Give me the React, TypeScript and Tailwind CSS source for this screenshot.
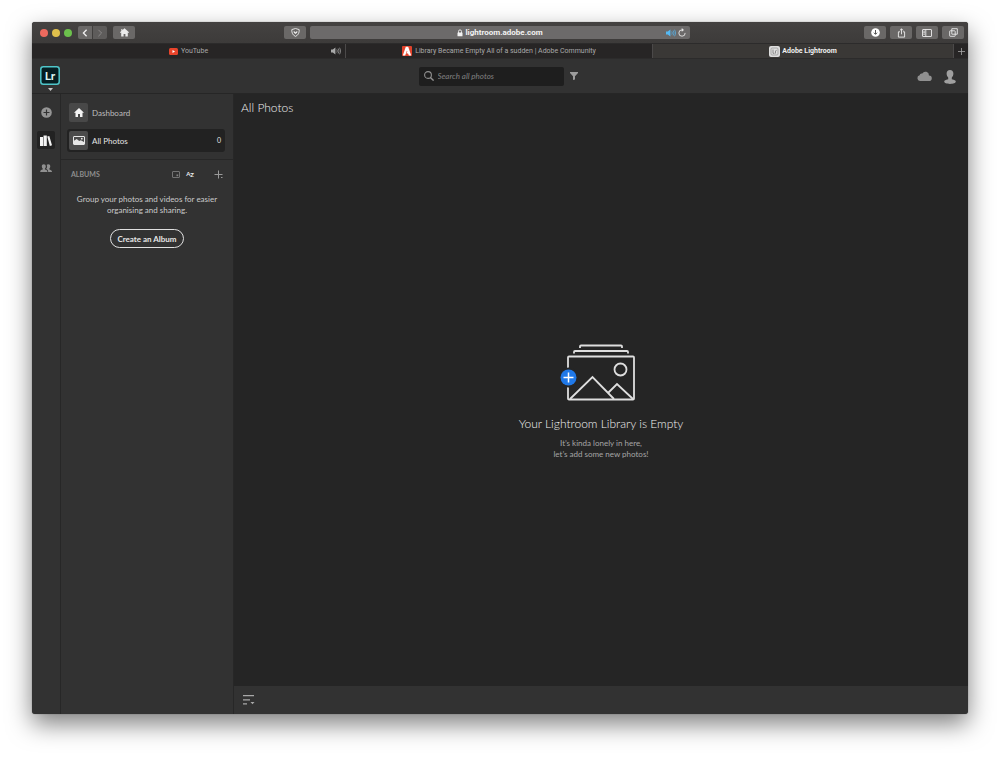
import type { ReactNode } from "react";

const ToolbarButton = ({
  label,
  children,
}: {
  label: string;
  children: ReactNode;
}) => (
  <button
    aria-label={label}
    className="flex h-[13px] w-[22px] items-center justify-center rounded-[2px] bg-[#6a6867] text-[#ececec]"
  >
    {children}
  </button>
);

const SpeakerIcon = () => (
  <svg width="10" height="8" viewBox="0 0 10 8" fill="none">
    <path d="M0 2.6h1.8L4.4.6v6.8L1.8 5.4H0z" fill="currentColor" />
    <path
      d="M5.8 2.4q1 1.6 0 3.2M7.2 1.5q1.7 2.5 0 5M8.6.7q2.3 3.3 0 6.6"
      stroke="currentColor"
      strokeWidth="0.7"
    />
  </svg>
);

const TitleBar = () => (
  <div className="flex h-[21px] items-center bg-linear-to-b from-[#444241] to-[#3d3b3a] px-1">
    <div className="flex flex-1 items-center">
      <div className="ml-1 flex gap-[4px]">
        <span className="size-[8px] rounded-full bg-[#ed6a5e]" />
        <span className="size-[8px] rounded-full bg-[#e0c04c]" />
        <span className="size-[8px] rounded-full bg-[#6cc14c]" />
      </div>
      <div className="mx-[6px] flex gap-px">
        <button
          aria-label="Back"
          className="flex h-[13px] w-[14px] items-center justify-center rounded-l-[2px] bg-[#6a6867] text-[#f0f0f0]"
        >
          <svg width="6" height="8" viewBox="0 0 6 8" fill="none">
            <path d="M4.6.8 1.4 4l3.2 3.2" stroke="currentColor" strokeWidth="1.3" />
          </svg>
        </button>
        <button
          aria-label="Forward"
          className="flex h-[13px] w-[14px] items-center justify-center rounded-r-[2px] bg-[#5e5c5b] text-[#8b8989]"
        >
          <svg width="6" height="8" viewBox="0 0 6 8" fill="none">
            <path d="M1.4.8 4.6 4 1.4 7.2" stroke="currentColor" />
          </svg>
        </button>
      </div>
      <ToolbarButton label="Home">
        <svg width="9" height="9" viewBox="0 0 9 9" fill="currentColor">
          <path d="M4.5.3 9 4.3l-.6.6-.6-.5v4.2H5.4V5.9H3.6v2.7H1.2V4.4l-.6.5L0 4.3l1.3-1.2V1h1.1v1.2z" />
        </svg>
      </ToolbarButton>
      <div className="mr-1 ml-auto">
        <ToolbarButton label="Privacy report">
          <svg width="9" height="9" viewBox="0 0 9 9" fill="none">
            <path
              d="M4.5.5 8.2 1.6c.2 3.3-.9 5.5-3.7 6.8C1.7 7.1.6 4.9.8 1.6z"
              stroke="currentColor"
              strokeWidth="0.9"
            />
            <path
              d="m2.5 3.2 1.4.3.6.9.6-.9 1.4-.3-.4 1.5L4.5 6 2.9 4.7z"
              fill="currentColor"
            />
          </svg>
        </ToolbarButton>
      </div>
    </div>
    <div className="flex h-[13px] w-[380px] items-center rounded-[2px] bg-[#6c6a6a] px-1">
      <div className="flex-1" />
      <div className="flex items-center gap-[2px] text-[8px] font-bold text-[#f2f2f2]">
        <svg width="6" height="8" viewBox="0 0 6 8" fill="none">
          <path d="M1.5 4V2.4a1.5 1.5 0 0 1 3 0V4" stroke="currentColor" strokeWidth="0.9" />
          <rect x="0.5" y="3.5" width="5" height="3.8" rx="0.5" fill="currentColor" />
        </svg>
        <span className="leading-[13px]">lightroom.adobe.com</span>
      </div>
      <div className="flex flex-1 items-center justify-end gap-[2px]">
        <button aria-label="Mute this tab" className="text-[#55b9f3]">
          <SpeakerIcon />
        </button>
        <button aria-label="Reload" className="text-[#e6e6e6]">
          <svg width="8" height="9" viewBox="0 0 7 8" fill="none">
            <path d="M6.3 4.4a2.8 2.8 0 1 1-2.7-2.7" stroke="currentColor" strokeWidth="0.8" />
            <path d="m3.3 0 2 1.7-2 1.6z" fill="currentColor" />
          </svg>
        </button>
      </div>
    </div>
    <div className="flex flex-1 justify-end gap-1">
      <ToolbarButton label="Downloads">
        <svg width="9" height="9" viewBox="0 0 9 9">
          <circle cx="4.5" cy="4.5" r="4.3" fill="#fff" />
          <path d="M4.5 2v4M2.9 4.7l1.6 1.7 1.6-1.7" stroke="#555" fill="none" />
        </svg>
      </ToolbarButton>
      <ToolbarButton label="Share">
        <svg width="9" height="10" viewBox="0 0 9 10" fill="none" stroke="currentColor" strokeWidth="0.9">
          <path d="M3 3.8H1.4v5.3h6.2V3.8H6M4.5 6.3V.9M2.9 2.4 4.5.8l1.6 1.6" />
        </svg>
      </ToolbarButton>
      <ToolbarButton label="Sidebar">
        <svg width="10" height="8" viewBox="0 0 10 8" fill="none" stroke="currentColor" strokeWidth="0.9">
          <rect x="0.5" y="0.5" width="9" height="7" rx="0.5" />
          <path d="M3.8.5v7M1.3 2.2h1.6M1.3 3.7h1.6M1.3 5.2h1.6" />
        </svg>
      </ToolbarButton>
      <ToolbarButton label="Tab overview">
        <svg width="9" height="9" viewBox="0 0 9 9" fill="none" stroke="currentColor" strokeWidth="0.9">
          <rect x="0.7" y="2.8" width="5.5" height="5.5" rx="0.5" />
          <path d="M2.8 6.2V.7h5.5v5.5H2.8" />
        </svg>
      </ToolbarButton>
    </div>
  </div>
);

const TabBar = () => (
  <div className="grid h-[16px] grid-cols-[314fr_307fr_300fr_15px] border-y border-[#2c2b2b] bg-[#272525] text-[7px] leading-[14px] text-[#a9a9a9]">
    <div className="flex items-center border-r border-[#4b4949] px-1">
      <span className="flex-1" />
      <a href="#youtube" className="flex items-center gap-[3px]">
        <svg width="9" height="7" viewBox="0 0 9 7">
          <rect width="9" height="7" rx="1.5" fill="#e8442b" />
          <path d="M3.5 2v3L6 3.5z" fill="#fff" />
        </svg>
        YouTube
      </a>
      <span className="flex flex-1 justify-end">
        <SpeakerIcon />
      </span>
    </div>
    <a
      href="#community"
      className="flex items-center justify-center gap-[3px] border-r border-[#4b4949]"
    >
      <svg width="10" height="10" viewBox="0 0 10 10">
        <rect width="10" height="10" rx="1" fill="#e2432c" />
        <path d="M.8 9.5 3.8.8h2.4l3 8.7H6.9L6 7.5H4.4l.9-1.8L5 4.5l-1.8 5z" fill="#fff" />
      </svg>
      Library Became Empty All of a sudden | Adobe Community
    </a>
    <a
      href="#lightroom"
      className="flex items-center justify-center gap-[2px] bg-[#3a3836] font-bold text-[#f0f0f0]"
    >
      <svg width="11" height="11" viewBox="0 0 11 11" fill="none">
        <rect width="11" height="11" rx="2" fill="#dedede" />
        <rect x="2" y="2" width="7" height="7" rx="1" stroke="#909090" strokeWidth="0.7" />
        <path d="M4 3.5v3.8h1.5M6.5 7.5V5q.2-.7 1-.6" stroke="#777" strokeWidth="0.8" />
      </svg>
      Adobe Lightroom
    </a>
    <button
      aria-label="New tab"
      className="flex items-center justify-center border-l border-[#4b4949]"
    >
      <svg width="7" height="7" viewBox="0 0 7 7" stroke="#a5a5a5" strokeWidth="0.8">
        <path d="M3.5 0v7M0 3.5h7" />
      </svg>
    </button>
  </div>
);

const AppHeader = () => (
  <header className="flex h-[35px] items-center border-b border-[#262626] bg-[#323232] px-2">
    <div className="flex flex-1 pt-1">
      <button aria-label="Lightroom menu" className="flex flex-col items-center gap-[3px]">
        <svg width="20" height="19" viewBox="0 0 20 19" fill="none">
          <rect
            x="0.8"
            y="0.8"
            width="18.4"
            height="17.4"
            rx="2.5"
            fill="#061e22"
            stroke="#4fc5c9"
            strokeWidth="1.5"
          />
          <text x="10" y="14" textAnchor="middle" fill="#dff6f6" className="text-[12px] font-bold">
            Lr
          </text>
        </svg>
        <svg width="5" height="3" viewBox="0 0 5 3" fill="#c8c8c8">
          <path d="M0 0h5L2.5 3z" />
        </svg>
      </button>
    </div>
    <div className="flex items-center gap-[6px]">
      <label className="flex h-[19px] w-[145px] items-center gap-1 rounded-[2px] bg-[#1e1e1e] px-[5px]">
        <svg
          width="10"
          height="10"
          viewBox="0 0 10 10"
          fill="none"
          stroke="#919191"
          className="shrink-0"
        >
          <circle cx="4" cy="4" r="3.4" strokeWidth="1.1" />
          <path d="m6.4 6.4 3.2 3.2" strokeWidth="1.4" />
        </svg>
        <input
          type="search"
          aria-label="Search all photos"
          placeholder="Search all photos"
          className="w-full min-w-0 bg-transparent text-[8px] text-[#ddd] italic outline-none placeholder:text-[#808080]"
        />
      </label>
      <button aria-label="Filter">
        <svg width="8" height="8" viewBox="0 0 8 8" fill="#9c9c9c">
          <path d="M0 0h8v1L5 4.3v3.2L3 8V4.3L0 1z" />
        </svg>
      </button>
    </div>
    <div className="flex flex-1 items-center justify-end gap-3 pr-1">
      <button aria-label="Cloud storage">
        <svg width="15" height="10" viewBox="0 0 15 10" fill="#909090">
          <path d="M3 10a2.9 2.9 0 0 1-.4-5.7 2.3 2.3 0 0 1 2.7-1.8A3.6 3.6 0 0 1 12 4.4a2.8 2.8 0 0 1 0 5.6z" />
        </svg>
      </button>
      <button aria-label="Account" className="pt-[2px]">
        <svg width="12" height="14" viewBox="0 0 12 14" fill="#a0a0a0">
          <path d="M6 0c2.1 0 3.5 1.5 3.4 3.7-.1 1.8-.8 2.9-1.6 3.8v1.7c2.7.4 4 1.3 4 2.4 0 1.4-2.6 2.4-5.8 2.4S.2 13 .2 11.6c0-1.1 1.3-2 4-2.4V7.5c-.8-.9-1.500-2-1.600-3.800C2.500 1.500 3.900 0 6 0z" />
        </svg>
      </button>
    </div>
  </header>
);

const Rail = () => (
  <nav className="flex w-[29px] shrink-0 flex-col items-center gap-[10px] border-r border-[#272727] pt-[9px]">
    <button aria-label="Add photos" className="flex size-[18px] items-center justify-center">
      <svg width="11" height="11" viewBox="0 0 11 11">
        <circle cx="5.5" cy="5.5" r="5.3" fill="#959595" />
        <path d="M5.5 2.5v6M2.5 5.5h6" stroke="#323232" strokeWidth="1.2" />
      </svg>
    </button>
    <button
      aria-label="My photos"
      className="flex size-[18px] items-center justify-center rounded-[2px] bg-[#222]"
    >
      <svg width="12" height="11" viewBox="0 0 12 11" fill="#f4f4f4">
        <path d="M0 2h3v9H0zM3.5.5h3.3V11H3.500zM7.300 1.600l2-.6L12 10.200l-2.200.7z" />
      </svg>
    </button>
    <button aria-label="Sharing" className="flex size-[18px] items-center justify-center">
      <svg width="12" height="9" viewBox="0 0 12 9" fill="#909090">
        <path d="M3.8.3c1.2 0 2 .9 2 2.1 0 1-.4 1.6-.9 2.2v.9c1.7.4 2.5 1 2.5 2.5H.2c0-1.5.8-2.1 2.5-2.5v-.9c-.5-.6-.9-1.2-.9-2.2 0-1.2.8-2.1 2-2.1z" />
        <path d="M6.6 1C7 .5 7.6.2 8.3.2c1.2 0 2 .9 2 2.1 0 1-.4 1.7-.9 2.2v1C11.1 6 12 6.500 12 8H8.200c0-1.500-.6-2.300-1.900-2.900v-.3c.6-.8.8-1.600.8-2.400 0-.6-.2-1-.5-1.400z" />
      </svg>
    </button>
  </nav>
);

const Sidebar = () => (
  <aside className="w-[173px] shrink-0 border-r border-[#272727] pt-[7px]">
    <div className="flex flex-col gap-[5px] pr-2 pb-[7px] pl-[6px] text-[8px]">
      <a href="#dashboard" className="flex h-[23px] items-center gap-1 px-[2px] text-[#bdbdbd]">
        <span className="flex size-[19px] items-center justify-center rounded-[2px] bg-[#484848]">
          <svg width="10" height="9" viewBox="0 0 10 9" fill="#f4f4f4">
            <path d="m5 0 5 4.7H8.5V9H6V6H4v3H1.5V4.7H0z" />
          </svg>
        </span>
        Dashboard
      </a>
      <a
        href="#all"
        className="flex h-[23px] items-center gap-1 rounded-[3px] bg-[#222] px-[2px] text-[#e4e4e4]"
      >
        <span className="flex size-[19px] items-center justify-center rounded-[2px] bg-[#4b4b4b]">
          <svg width="12" height="9" viewBox="0 0 12 9">
            <rect x="0.5" y="0.5" width="11" height="8" rx="0.5" fill="#4b4b4b" stroke="#e6e6e6" />
            <path d="M1 4.7 3.7 3l2.5 2.1 1.6-.8L11 6v2.5H1z" fill="#e6e6e6" />
            <circle cx="8.8" cy="2.7" r="0.9" fill="#e6e6e6" />
          </svg>
        </span>
        All Photos
        <span className="ml-auto pr-[2px] text-[7px]">0</span>
      </a>
    </div>
    <div className="flex h-[29px] items-center border-t border-[#272727] px-[10px]">
      <h2 className="text-[7px] font-bold text-[#8e8e8e]">ALBUMS</h2>
      <button aria-label="Album view" className="ml-auto">
        <svg width="8" height="7" viewBox="0 0 8 7" fill="none">
          <rect x="0.5" y="0.5" width="7" height="6" rx="0.5" stroke="#858585" strokeWidth="0.8" />
          <rect x="4.5" y="3.5" width="1.7" height="1.7" fill="#858585" />
        </svg>
      </button>
      <button
        aria-label="Sort albums"
        className="ml-[6px] flex text-[6px] leading-[8px] font-bold text-[#f0f0f0]"
      >
        A<span className="pt-px">Z</span>
      </button>
      <button aria-label="Add album" className="ml-5">
        <svg width="9" height="9" viewBox="0 0 9 9" stroke="#9a9a9a">
          <path d="M4.5.5v8M.5 4.5h8M7 7.5h1.5" />
        </svg>
      </button>
    </div>
    <div className="flex flex-col items-center gap-[13px] pt-[6px]">
      <p className="text-center text-[8px] leading-[11px] text-[#cbcbcb]">
        Group your photos and videos for easier
        <br />
        organising and sharing.
      </p>
      <button className="h-[19px] rounded-full border border-[#e0e0e0] px-[6px] text-[8px] leading-[16px] font-bold text-[#e6e6e6]">
        Create an Album
      </button>
    </div>
  </aside>
);

const Library = () => (
  <div className="flex flex-1 flex-col">
    <main className="flex flex-1 flex-col bg-[#252525]">
      <h1 className="px-[7px] pt-[5px] text-[12px] leading-[18px] font-light text-[#f0f0f0]">
        All Photos
      </h1>
      <div className="flex flex-1 flex-col items-center justify-center">
        <svg
          width="82"
          height="58"
          viewBox="0 0 82 58"
          fill="none"
          stroke="#dedede"
          strokeWidth="1.8"
        >
          <path d="M20 4V2.5q0-1 1-1h40q1 0 1 1V4M14 9.5V8q0-1 1-1h52q1 0 1 1v1.5" />
          <rect x="8" y="12.5" width="66" height="43" rx="1" />
          <path d="m10 55 22.5-22L54 55M48.5 48.5 57 40l16 15" />
          <circle cx="60.5" cy="25.5" r="6" />
          <circle cx="8.5" cy="33.5" r="10" fill="#252525" stroke="none" />
          <circle cx="8.5" cy="33.5" r="8" fill="#1f78e8" stroke="none" />
          <path d="M8.5 28.5v10M3.5 33.5h10" stroke="#fff" strokeWidth="1.5" />
        </svg>
        <h2 className="mt-[13px] text-[12px] leading-[18px] font-light text-[#f0f0f0]">
          Your Lightroom Library is Empty
        </h2>
        <p className="mt-[5px] text-center text-[8px] leading-[11px] text-[#a6a6a6]">
          It’s kinda lonely in here,
          <br />
          let’s add some new photos!
        </p>
      </div>
    </main>
    <footer className="flex h-[28px] items-center px-[9px]">
      <button aria-label="Sort order">
        <svg width="12" height="10" viewBox="0 0 12 10" fill="#a8a8a8">
          <path d="M0 0h11v1.3H0zM0 4.3h7v1.3H0zM0 8.3h4v1.3H0zM7.5 7h4l-2 2.3z" />
        </svg>
      </button>
    </footer>
  </div>
);

export default function App() {
  return (
    <div className="flex min-h-screen flex-col bg-white px-8 pt-[22px] pb-[43px]">
      <div className="flex flex-1 flex-col overflow-hidden rounded-[3px] bg-[#323232] font-['Roboto',sans-serif] shadow-[0_10px_24px_rgba(0,0,0,0.5),0_0_1px_rgba(0,0,0,0.6)]">
        <TitleBar />
        <TabBar />
        <div className="flex flex-1 flex-col font-['Lato',sans-serif]">
          <AppHeader />
          <div className="flex flex-1">
            <Rail />
            <Sidebar />
            <Library />
          </div>
        </div>
      </div>
    </div>
  );
}
